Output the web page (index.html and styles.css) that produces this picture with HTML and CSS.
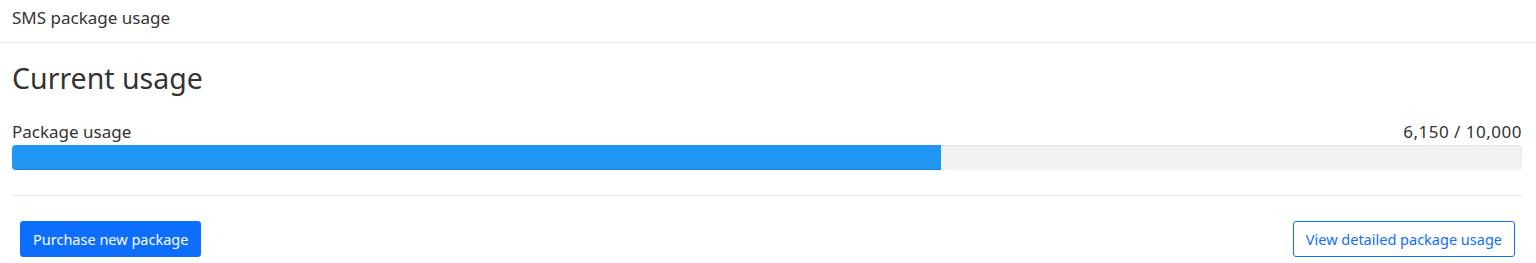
FILE: index.html
```html
<!DOCTYPE html>
<html lang="en">
<head>
  <meta charset="utf-8">
  <title>SMS package usage</title>
  <link rel="stylesheet" href="styles.css">
</head>
<body>
  <div class="card">
    <div class="card-header">SMS package usage</div>
    <div class="card-body">
      <h2 class="title">Current usage</h2>
      <div class="usage-row">
        <span>Package usage</span>
        <span class="count">6,150 / 10,000</span>
      </div>
      <div class="progress">
        <div class="progress-bar" style="width: 61.5%"></div>
      </div>
      <hr class="divider">
      <div class="actions">
        <button type="button" class="btn btn-primary">Purchase new package</button>
        <button type="button" class="btn btn-outline">View detailed package usage</button>
      </div>
    </div>
  </div>
</body>
</html>
```

FILE: styles.css
```css
body {
  margin: 0;
  font-family: "Noto Sans", "Open Sans", sans-serif;
  color: #333;
  background: #fff;
}
.card-header {
  height: 43px;
  box-sizing: border-box;
  padding: 6px 12px 0;
  font-size: 17px;
  border-bottom: 1px solid #e6e6e6;
}
.card-body {
  padding: 0 14px 0 12px;
}
.title {
  margin: 17px 0 0;
  font-size: 28.5px;
  font-weight: 400;
  line-height: 36px;
}
.usage-row {
  display: flex;
  justify-content: space-between;
  margin-top: 26px;
  font-size: 17px;
  line-height: 20px;
}
.count {
  letter-spacing: 0.5px;
}
.progress {
  margin-top: 3px;
  height: 25px;
  background: #f2f2f2;
  border-radius: 4px;
  box-shadow: inset 0 1px 2px rgba(0, 0, 0, 0.08);
  overflow: hidden;
}
.progress-bar {
  height: 100%;
  background: #2196f3;
  box-shadow: inset 0 -1px 0 rgba(0, 0, 0, 0.12);
}
.divider {
  margin: 25px 0 0;
  border: 0;
  border-top: 1px solid #e8e8e8;
}
.actions {
  display: flex;
  justify-content: space-between;
  padding: 25px 7px 0 8px;
}
.btn {
  height: 36px;
  padding: 0 12px;
  font-family: inherit;
  font-size: 14.5px;
  border-radius: 3px;
  cursor: pointer;
}
.btn-primary {
  background: #0d6efd;
  color: #fff;
  border: 1px solid #0d6efd;
}
.btn-outline {
  background: #fff;
  color: #0d6efd;
  border: 1px solid #0d6efd;
}
```
